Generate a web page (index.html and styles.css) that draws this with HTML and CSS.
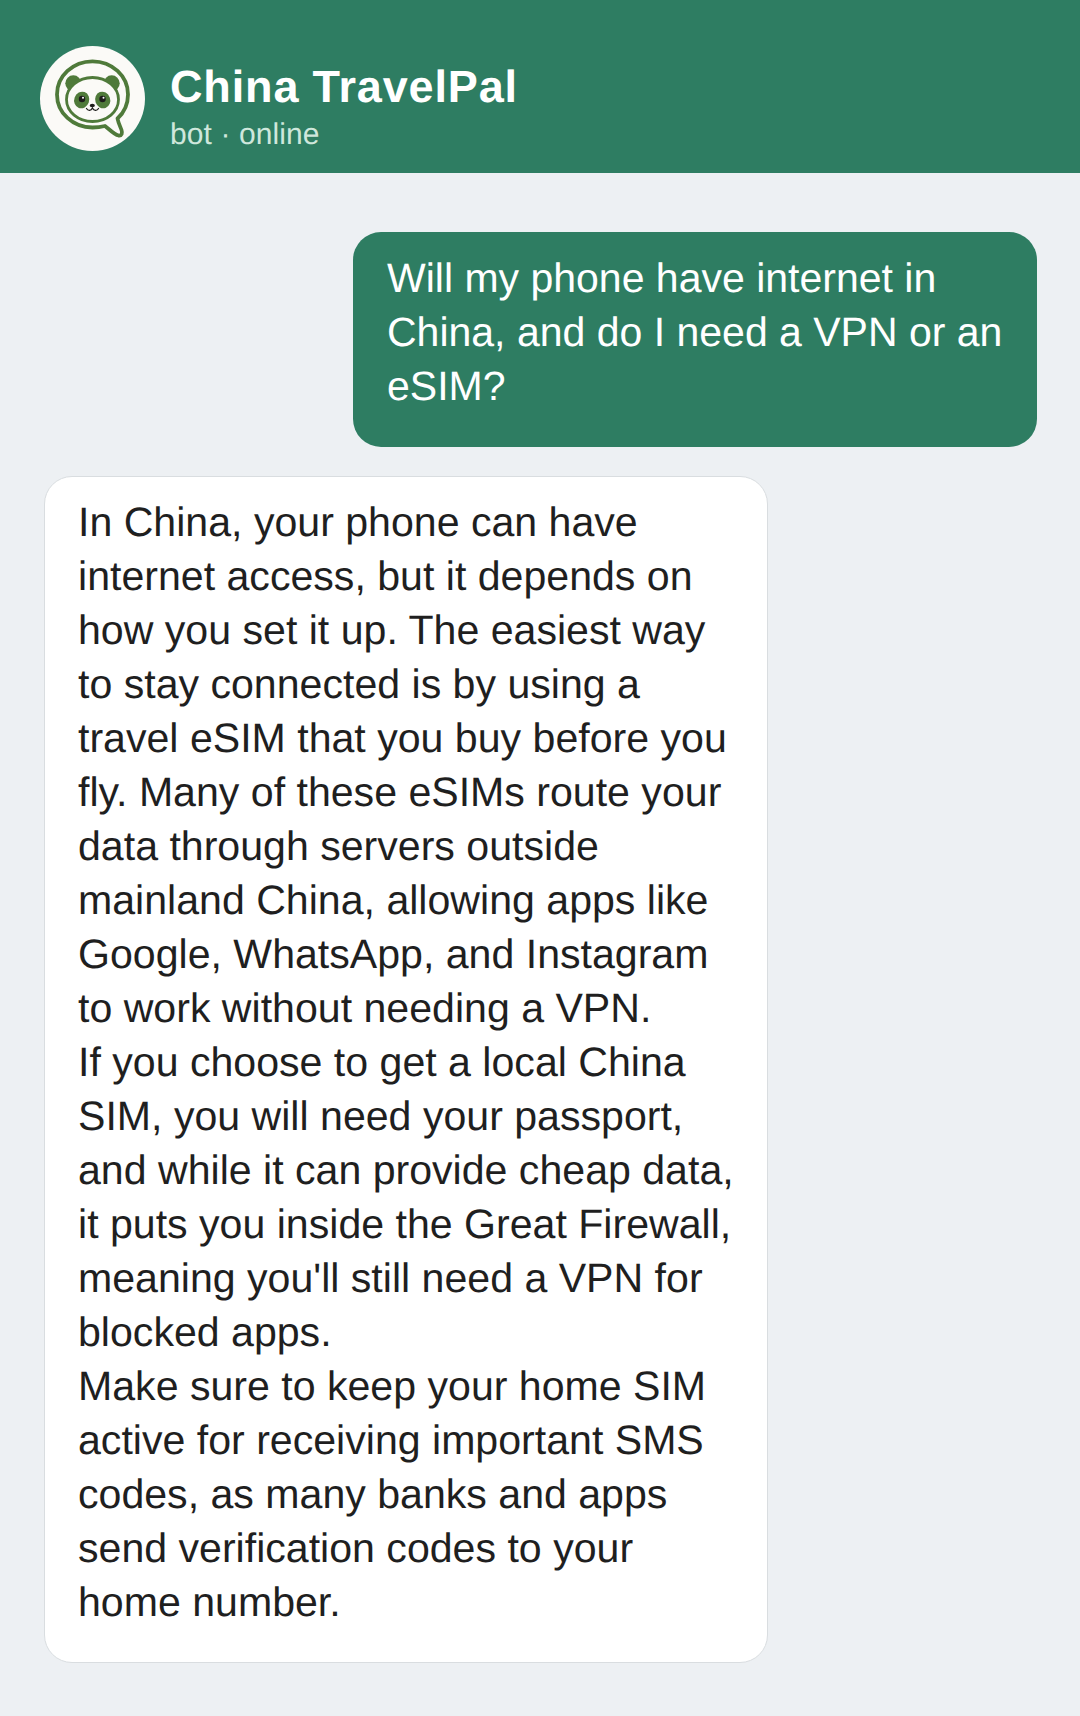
FILE: index.html
```html
<!DOCTYPE html>
<html lang="en">
<head>
  <title>China TravelPal</title>
  <meta charset="UTF-8">
  <meta name="viewport" content="width=device-width, initial-scale=1.0">
  <link rel="stylesheet" href="styles.css">
</head>
<body>
  <div class="header">
    <svg class="avatar" viewBox="0 0 105 105" role="img" aria-label="China TravelPal logo">
      <circle cx="52.5" cy="52.5" r="52.5" fill="#fbfaf7"/>
      <!-- speech bubble ring -->
      <path d="M52.5 15.3 C33 15.3 17 30 17 48.4 C17 67 33 81.5 52.5 81.5 C57 81.5 61 81 65 80 C69 83 74 88.5 78.5 89.5 C82 90 82.5 87 81.5 84 C80.5 81 78.5 77.5 77.5 72.5 C84 66.5 88 58 88 48.4 C88 30 72 15.3 52.5 15.3 Z" fill="none" stroke="#4f7a3a" stroke-width="3.8" stroke-linejoin="round"/>
      <!-- panda -->
      <circle cx="33.3" cy="37.3" r="8" fill="#4f7a3a"/>
      <circle cx="71.7" cy="37.3" r="8" fill="#4f7a3a"/>
      <ellipse cx="52.5" cy="53.5" rx="26" ry="22" fill="#fbfaf7" stroke="#4f7a3a" stroke-width="2.8"/>
      <ellipse cx="41.7" cy="54" rx="7.5" ry="8.4" transform="rotate(20 41.7 54)" fill="#4f7a3a"/>
      <ellipse cx="62.7" cy="54" rx="7.5" ry="8.4" transform="rotate(-20 62.7 54)" fill="#4f7a3a"/>
      <circle cx="42" cy="53" r="3.2" fill="#1d1d1b"/>
      <circle cx="62.5" cy="53" r="3.2" fill="#1d1d1b"/>
      <circle cx="43" cy="51.8" r="1" fill="#fff"/>
      <circle cx="63.5" cy="51.8" r="1" fill="#fff"/>
      <ellipse cx="52.3" cy="59.5" rx="2.6" ry="1.8" fill="#1d1d1b"/>
      <path d="M46.5 62.5 C48 65 51 65 52.4 62 C54 65 57 65 58.5 62.5" fill="none" stroke="#1d1d1b" stroke-width="1.3" stroke-linecap="round"/>
    </svg>
    <div class="header-text">
      <h1>China TravelPal</h1>
      <div class="status">bot · online</div>
    </div>
  </div>
  <div class="messages">
    <div class="msg msg-user">Will my phone have internet in China, and do I need a VPN or an eSIM?</div>
    <div class="msg msg-bot">
      <p>In China, your phone can have internet access, but it depends on how you set it up. The easiest way to stay connected is by using a travel eSIM that you buy before you fly. Many of these eSIMs route your data through servers outside mainland China, allowing apps like Google, WhatsApp, and Instagram to work without needing a VPN.</p>
      <p>If you choose to get a local China SIM, you will need your passport, and while it can provide cheap data, it puts you inside the Great Firewall, meaning you'll still need a VPN for blocked apps.</p>
      <p>Make sure to keep your home SIM active for receiving important SMS codes, as many banks and apps send verification codes to your home number.</p>
    </div>
  </div>
</body>
</html>
```

FILE: styles.css
```css
body {
  font-family: 'Liberation Sans', Arial, sans-serif;
  background: #edf0f3;
  color: #1f1f1f;
  margin: 0;
  padding: 0;
  text-rendering: geometricPrecision;
}
.header {
  background: #2e7d62;
  color: #fff;
  height: 173px;
  padding: 46px 40px 0;
  box-sizing: border-box;
  display: flex;
  gap: 25px;
}
.avatar {
  width: 105px;
  height: 105px;
  flex: none;
}
.header-text {
  padding-top: 18px;
}
.header h1 {
  margin: 0;
  font-size: 45px;
  line-height: 46px;
  font-weight: 700;
  letter-spacing: 0.85px;
}
.status {
  margin-top: 7px;
  font-size: 30px;
  line-height: 36px;
  letter-spacing: 0.1px;
  color: #cfe7dc;
}
.messages {
  display: flex;
  flex-direction: column;
  padding: 59px 43px 54px 44px;
  gap: 29px;
}
.msg {
  font-size: 41px;
  line-height: 54px;
  border-radius: 28px;
  box-sizing: border-box;
}
.msg-user {
  align-self: flex-end;
  width: 684px;
  padding: 19px 34px 34px;
  background: #2e7d62;
  color: #fff;
}
.msg-bot {
  align-self: flex-start;
  width: 724px;
  padding: 18px 33px 33px;
  font-size: 41.1px;
  background: #fff;
  border: 1px solid #d9dde0;
}
.msg-bot p {
  margin: 0;
}
```
